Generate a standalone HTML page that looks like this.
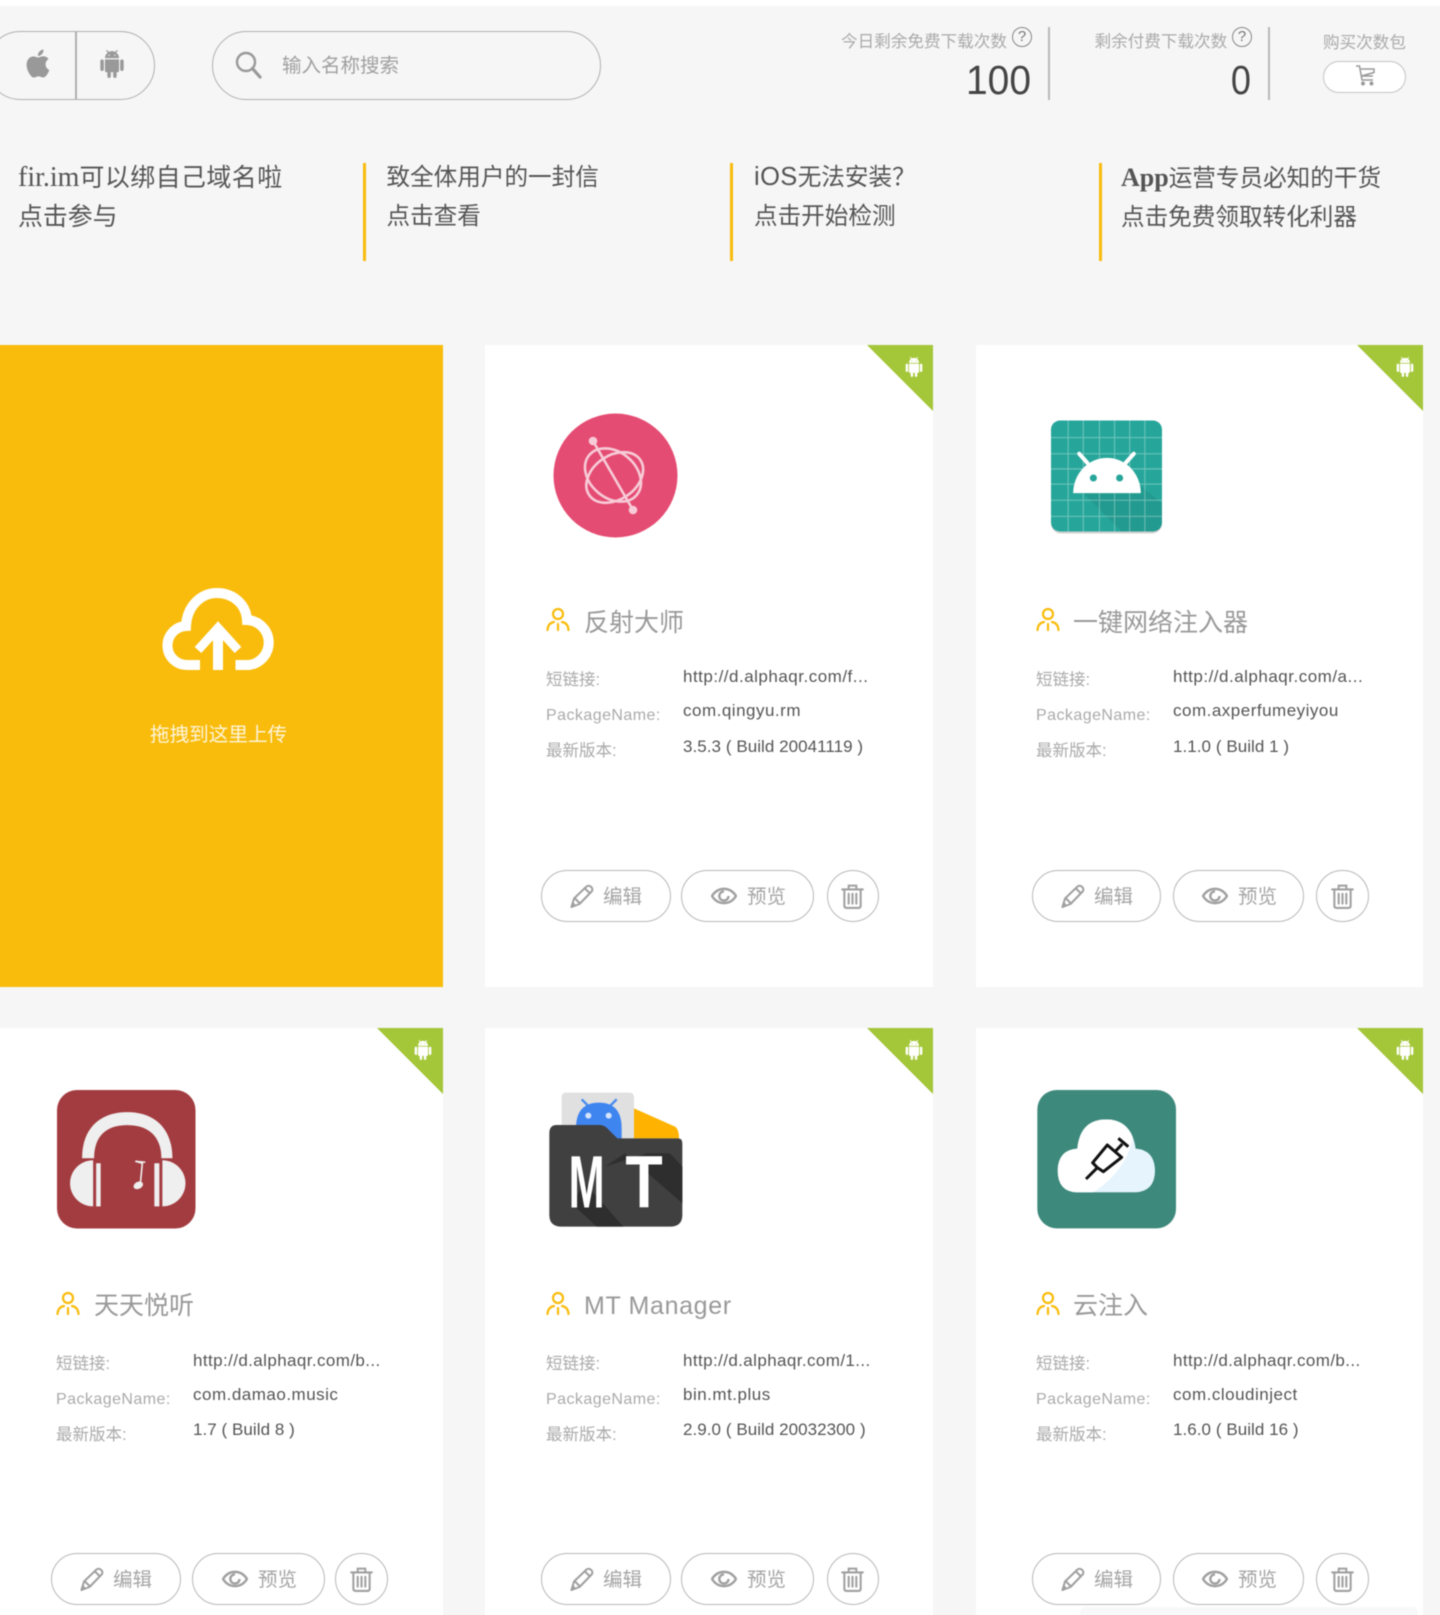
<!DOCTYPE html>
<html lang="zh-CN"><head><meta charset="utf-8"><title>fir.im</title>
<style>
*{box-sizing:border-box;margin:0;padding:0}
html,body{width:1440px;height:1615px;overflow:hidden;background:#f6f6f6}
body{font-family:"Liberation Sans","Noto Sans CJK SC",sans-serif;position:relative}
#p{position:absolute;left:-10px;top:-10px;width:1460px;height:1635px;overflow:hidden;background:#f6f6f6;filter:blur(.6px)}
#q{position:absolute;left:10px;top:10px;width:1440px;height:1615px}
.a{position:absolute;white-space:nowrap}
svg{position:absolute;overflow:visible}
#top{left:-10px;top:-10px;width:1460px;height:16px;background:#fff}
.pill{border:1.5px solid #b0b0b0;border-radius:35px;top:31px;height:69px}
.g{color:#aaa;font-size:16.6px;line-height:24px}
.num{color:#444;font-size:41px;line-height:44px;text-align:right;font-weight:400;transform-origin:100% 50%}
.vl{width:1.5px;background:#b8b8b8;top:27px;height:73px}
.help{width:20px;height:20px;border:1.6px solid #888;border-radius:50%;color:#777;font-size:15px;line-height:17px;text-align:center}
.bar{width:3px;top:163px;height:98px;background:#f9bc0c}
.bt{color:#555;font-size:23.6px;line-height:39px;left:0;top:158.5px}
.card{position:absolute;height:642px;background:#fff;overflow:hidden}
.tri{position:absolute;right:0;top:0;width:0;height:0;border-style:solid;border-width:0 66px 66px 0;border-color:transparent #a4c639 transparent transparent}
.nm{left:99px;top:263px;font-size:25px;line-height:30px;color:#999}
.lb{left:61px;font-size:16.5px;line-height:24px;color:#aaa}
.pk{font-size:16px;letter-spacing:.45px}
.v{left:198px;font-size:17px;line-height:24px;color:#555;letter-spacing:.5px}
.u2{letter-spacing:.4px}
.ver{letter-spacing:.05px}
.btn{position:absolute;top:525px;height:52px;border:1.5px solid #b8b8b8;border-radius:26px;background:#fff}
.btn span{position:absolute;top:13px;font-size:19.5px;line-height:26px;color:#a5a5a5;white-space:nowrap}
</style></head><body><div id="p"><div id="q">
<svg width="0" height="0" style="position:absolute">
<defs>
<symbol id="and" viewBox="0 0 24 24"><path d="M6 18c0 .55.45 1 1 1h1v3.5c0 .83.67 1.5 1.5 1.5s1.5-.67 1.5-1.5V19h2v3.5c0 .83.67 1.5 1.5 1.5s1.5-.67 1.5-1.5V19h1c.55 0 1-.45 1-1V8H6v10zM3.5 8C2.67 8 2 8.67 2 9.5v7c0 .83.67 1.5 1.5 1.5S5 17.33 5 16.5v-7C5 8.67 4.33 8 3.5 8zm17 0c-.83 0-1.5.67-1.5 1.5v7c0 .83.67 1.5 1.5 1.5s1.5-.67 1.5-1.5v-7c0-.83-.67-1.5-1.5-1.5zm-4.97-5.84l1.3-1.3c.2-.2.2-.51 0-.71-.2-.2-.51-.2-.71 0l-1.48 1.48C13.85 1.23 12.95 1 12 1c-.96 0-1.86.23-2.66.63L7.85.15c-.2-.2-.51-.2-.71 0-.2.2-.2.51 0 .71l1.31 1.31C6.97 3.26 6 5.01 6 7h12c0-1.99-.97-3.75-2.47-4.84zM10 5H9V4h1v1zm5 0h-1V4h1v1z"/></symbol>
<symbol id="per" viewBox="0 0 24 24"><g fill="none" stroke="#f9bc0c" stroke-width="2.2" stroke-linecap="round"><circle cx="12" cy="7" r="5"/><path d="M1.5 23Q2 16 8 15M22.5 23Q22 16 16 15"/><path d="M12 17v6"/></g></symbol>
<symbol id="pen" viewBox="0 0 24 24"><g fill="none" stroke="#a0a0a0" stroke-width="2" stroke-linejoin="round"><path d="M1.5 23L4 14.5 16.5 2.5Q18.8.8 21.3 3 23.3 5.3 21.6 7.5L9.5 20Z"/><path d="M5 14.5l5 5M15 4.500l5 5"/><path d="M1.5 23l3-1.500-1.500-2.500z" fill="#a0a0a0"/></g></symbol>
<symbol id="eye" viewBox="0 0 26 20"><g fill="none" stroke="#a0a0a0" stroke-width="2.400"><path d="M1 10C7 .5 19 .5 25 10 19 19.500 7 19.500 1 10Z"/><path d="M17.500 10A4.600 4.600 0 1 1 13 5.400"/></g></symbol>
<symbol id="tr" viewBox="0 0 21 23"><g fill="none" stroke="#a0a0a0" stroke-width="1.900" stroke-linecap="round"><path d="M1 5H20M7 4.500V1.500H14V4.500"/><path d="M3 5.500V20Q3 22 5 22H16Q18 22 18 20V5.500"/><path d="M7 9v9M10.500 9v9M14 9v9"/></g></symbol>
</defs></svg>

<div id="top" class="a"></div>
<div class="a" style="left:-10px;top:345px;width:12px;height:642px;background:#f9bc0c"></div>
<div class="a" style="left:-10px;top:1028px;width:12px;height:600px;background:#fff"></div>

<!-- toolbar -->
<div class="a pill" style="left:-14px;width:169px"></div>
<div class="a" style="left:75px;top:31px;width:1.5px;height:69px;background:#b0b0b0"></div>
<svg style="left:24px;top:48px" width="28" height="31" viewBox="2 1 20 22"><path fill="#999" d="M18.710 19.500C17.880 20.740 17 21.950 15.660 21.970C14.320 22 13.890 21.180 12.370 21.180C10.840 21.180 10.370 21.950 9.100 22C7.790 22.050 6.800 20.680 5.960 19.470C4.250 17 2.940 12.450 4.700 9.390C5.570 7.870 7.130 6.910 8.820 6.880C10.100 6.860 11.320 7.750 12.110 7.750C12.890 7.750 14.370 6.680 15.920 6.840C16.570 6.870 18.390 7.100 19.560 8.820C19.470 8.880 17.390 10.100 17.410 12.630C17.440 15.650 20.060 16.660 20.090 16.670C20.060 16.740 19.670 18.110 18.710 19.500M13 3.500C13.730 2.670 14.940 2.040 15.940 2C16.070 3.170 15.600 4.350 14.900 5.190C14.210 6.040 13.070 6.700 11.950 6.610C11.800 5.460 12.360 4.260 13 3.500Z"/></svg>
<svg style="left:98px;top:50px;fill:#999" width="28" height="28"><use href="#and" width="28" height="28"/></svg>

<div class="a pill" style="left:212px;width:389px"></div>
<svg style="left:234px;top:50px" width="30" height="30"><circle cx="12" cy="12" r="9" fill="none" stroke="#999" stroke-width="2.400"/><path d="M18.500 18.500L26 27" stroke="#999" stroke-width="3.200" stroke-linecap="round"/></svg>
<div class="a" style="left:282px;top:53.5px;font-size:19.5px;line-height:24px;color:#a0a0a0">输入名称搜索</div>

<div class="a g" style="left:841px;top:30px">今日剩余免费下载次数</div>
<div class="a help" style="left:1012px;top:27px">?</div>
<div class="a num" style="left:931px;width:100px;top:58px;transform:scaleX(.95)">100</div>
<div class="a vl" style="left:1048px"></div>
<div class="a g" style="left:1094.5px;top:30px">剩余付费下载次数</div>
<div class="a help" style="left:1232px;top:27px">?</div>
<div class="a num" style="left:1180px;width:71px;top:58px;transform:scaleX(.88)">0</div>
<div class="a vl" style="left:1268px"></div>
<div class="a g" style="left:1323px;top:31px">购买次数包</div>
<div class="a" style="left:1323px;top:61px;width:83px;height:32px;border:1.5px solid #c4c4c4;border-radius:16px;background:#fff"></div>
<svg style="left:1355px;top:65px" width="21" height="21" fill="none" stroke="#999" stroke-width="1.500"><path d="M1 1H4.500L7 15H18M6 4H19V7.500L6.500 11H18"/><circle cx="8" cy="18.500" r="1.200" fill="#999"/><circle cx="16.500" cy="18.500" r="1.200" fill="#999"/></svg>

<!-- banners -->
<div class="a bt" style="left:18px;font-size:24.9px;top:158px"><span style="font-family:'Liberation Serif','Noto Sans CJK SC',serif;font-size:28px">fir.im</span><span style="letter-spacing:.5px">可以绑自己域名啦</span><br>点击参与</div>
<div class="a bar" style="left:363px"></div>
<div class="a bt" style="left:386.5px">致全体用户的一封信<br>点击查看</div>
<div class="a bar" style="left:730px"></div>
<div class="a bt" style="left:754px;top:157.5px"><span style="font-size:25.5px;letter-spacing:.4px">iOS</span>无法安装？<br>点击开始检测</div>
<div class="a bar" style="left:1099px"></div>
<div class="a bt" style="left:1121px;top:157.5px"><b style="font-family:'Liberation Serif','Noto Sans CJK SC',serif;font-size:26px">App</b>运营专员必知的干货<br>点击免费领取转化利器</div>

<!-- upload -->
<div class="a" style="left:0;top:345px;width:443px;height:642px;background:#f9bc0c"></div>
<svg style="left:100px;top:560px" width="240" height="200" fill="none" stroke="#fff"><path stroke-width="10" d="M100 105H88A19.500 19.500 0 0 1 86 66C87 46 101 33 117 33C133 33 146 44 147 60A22.600 22.600 0 0 1 149 105H135.500"/><path stroke-width="9" d="M98 90L118 68L138 90"/><path stroke-width="10" d="M118 70V110"/></svg>
<div class="a" style="left:150px;top:723px;font-size:19.6px;line-height:24px;color:#fff;opacity:.85">拖拽到这里上传</div>

<!-- card: 反射大师 -->
<div class="card" style="left:485px;top:345px;width:448px">
<div class="tri"></div><svg style="left:419px;top:12px;fill:#fff" width="20" height="20"><use href="#and" width="20" height="20"/></svg>
<svg style="left:68px;top:68px" width="125" height="125" viewBox="0 0 125 125"><circle cx="62.500" cy="62.500" r="62" fill="#e54c73"/><g fill="none" stroke="#f7cbd7" stroke-width="2.600"><path d="M40 28L80 97"/><ellipse cx="60" cy="62" rx="31" ry="23" transform="rotate(40 60 62)"/><ellipse cx="60" cy="62" rx="31" ry="22" transform="rotate(-35 60 62) translate(0 3)"/><circle cx="40" cy="28" r="3" fill="#f7cbd7"/><circle cx="80" cy="97" r="3" fill="#f7cbd7"/></g></svg>
<svg style="left:61px;top:262px" width="24" height="24"><use href="#per" width="24" height="24"/></svg>
<div class="a nm">反射大师</div>
<div class="a lb" style="top:323px">短链接:</div><div class="a lb pk" style="top:359px">PackageName:</div><div class="a lb" style="top:394px">最新版本:</div>
<div class="a v" style="top:320px">http://d.alphaqr.com/f...</div><div class="a v" style="top:354px">com.qingyu.rm</div><div class="a v ver" style="top:390px">3.5.3 ( Build 20041119 )</div>
<div class="btn" style="left:56px;width:130px"><svg style="left:28px;top:13px" width="24" height="24"><use href="#pen" width="24" height="24"/></svg><span style="left:61px">编辑</span></div>
<div class="btn" style="left:196px;width:133px"><svg style="left:29px;top:15px" width="26" height="20"><use href="#eye" width="26" height="20"/></svg><span style="left:65px">预览</span></div>
<div class="btn" style="left:342px;width:52px"><svg style="left:13px;top:12.500px" width="23" height="25"><use href="#tr" width="23" height="25"/></svg></div>
</div>

<!-- card: 一键网络注入器 -->
<div class="card" style="left:976px;top:345px;width:447px">
<div class="tri"></div><svg style="left:419px;top:12px;fill:#fff" width="20" height="20"><use href="#and" width="20" height="20"/></svg>
<svg style="left:75px;top:75px" width="111" height="112" viewBox="0 0 110 110"><rect x="0" y="2" width="110" height="110" rx="10" fill="#000" opacity=".18"/><rect width="110" height="110" rx="9" fill="#26a69a"/><path d="M32 72L70 110H101Q110 110 110 101V82L89 65Z" fill="#000" opacity=".07"/><path d="M17 0V110M32 0V110M48 0V110M63 0V110M78 0V110M93 0V110M0 17H110M0 33H110M0 48H110M0 63H110M0 79H110M0 95H110" stroke="#fff" stroke-opacity=".35" stroke-width="1"/><path d="M22 72A33.500 35 0 0 1 89 72Z" fill="#fff"/><path d="M28 33L36 42M82 33L74 42" stroke="#fff" stroke-width="4" stroke-linecap="round"/><circle cx="42" cy="57" r="3.500" fill="#26a69a"/><circle cx="68" cy="57" r="3.500" fill="#26a69a"/></svg>
<svg style="left:60px;top:262px" width="24" height="24"><use href="#per" width="24" height="24"/></svg>
<div class="a nm" style="left:97px">一键网络注入器</div>
<div class="a lb" style="left:60px;top:323px">短链接:</div><div class="a lb pk" style="left:60px;top:359px">PackageName:</div><div class="a lb" style="left:60px;top:394px">最新版本:</div>
<div class="a v" style="left:197px;top:320px">http://d.alphaqr.com/a...</div><div class="a v" style="left:197px;top:354px">com.axperfumeyiyou</div><div class="a v ver" style="left:197px;top:390px">1.1.0 ( Build 1 )</div>
<div class="btn" style="left:56px;width:129px"><svg style="left:28px;top:13px" width="24" height="24"><use href="#pen" width="24" height="24"/></svg><span style="left:61px">编辑</span></div>
<div class="btn" style="left:197px;width:131px"><svg style="left:28px;top:15px" width="26" height="20"><use href="#eye" width="26" height="20"/></svg><span style="left:64px">预览</span></div>
<div class="btn" style="left:340px;width:53px"><svg style="left:14px;top:12.500px" width="23" height="25"><use href="#tr" width="23" height="25"/></svg></div>
</div>

<!-- card: 天天悦听 -->
<div class="card" style="left:0;top:1028px;width:443px">
<div class="tri"></div><svg style="left:413px;top:12px;fill:#fff" width="20" height="20"><use href="#and" width="20" height="20"/></svg>
<svg style="left:56.500px;top:62px" width="138.500" height="138.500" viewBox="0 0 138 138"><rect width="138" height="138" rx="20" fill="#a33c40"/><g fill="#efefef"><path d="M25 68C25 38 43 22 70 22S115 38 115 68H104C104 46 91 35 70 35S37 46 37 68Z"/><path d="M36 70A23 23 0 0 0 36 116Z"/><path d="M105 70A23 23 0 0 1 105 116Z"/><rect x="39" y="73" width="4.500" height="43"/><rect x="97" y="73" width="5" height="43"/><ellipse cx="81" cy="95" rx="5" ry="3.500" transform="rotate(-25 81 95)"/></g><path d="M78 71L85 73 83 94M78 71L88 72" fill="none" stroke="#efefef" stroke-width="1.600"/></svg>
<svg style="left:56px;top:263px" width="24" height="24"><use href="#per" width="24" height="24"/></svg>
<div class="a nm" style="left:94px;top:262.5px">天天悦听</div>
<div class="a lb" style="left:56px;top:324px">短链接:</div><div class="a lb pk" style="left:56px;top:360px">PackageName:</div><div class="a lb" style="left:56px;top:395px">最新版本:</div>
<div class="a v u2" style="left:193px;top:321px">http://d.alphaqr.com/b...</div><div class="a v" style="left:193px;top:355px">com.damao.music</div><div class="a v ver" style="left:193px;top:390px">1.7 ( Build 8 )</div>
<div class="btn" style="left:51px;width:130px"><svg style="left:28px;top:13px" width="24" height="24"><use href="#pen" width="24" height="24"/></svg><span style="left:61px">编辑</span></div>
<div class="btn" style="left:192px;width:133px"><svg style="left:29px;top:15px" width="26" height="20"><use href="#eye" width="26" height="20"/></svg><span style="left:65px">预览</span></div>
<div class="btn" style="left:335px;width:53px"><svg style="left:14px;top:12.500px" width="23" height="25"><use href="#tr" width="23" height="25"/></svg></div>
</div>

<!-- card: MT Manager -->
<div class="card" style="left:485px;top:1028px;width:448px">
<div class="tri"></div><svg style="left:419px;top:12px;fill:#fff" width="20" height="20"><use href="#and" width="20" height="20"/></svg>
<svg style="left:45px;top:42px" width="200" height="180" viewBox="0 0 600 540"><rect x="95" y="68" width="217" height="150" rx="12" fill="#e0e0e0"/><path d="M312 115L435 170Q447 178 447 205H312Z" fill="#ffb300"/><path d="M155 88L175 108M260 88L240 108" stroke="#4a8cf0" stroke-width="7"/><path d="M138 175Q138 98 207 98 275 98 275 175V210H138Z" fill="#3f85f0"/><circle cx="175" cy="137" r="9" fill="#d5e4fc"/><circle cx="236" cy="137" r="9" fill="#d5e4fc"/><path d="M58 190Q58 165 80 165H210Q222 165 232 175L262 205H445Q457 205 457 220V435Q457 470 420 470H95Q58 470 58 435Z" fill="#404040"/><path d="M125 400L200 470H280L165 340ZM225 290L285 250 457 400V290L420 250 350 250Z" fill="#2e2e2e"/><text x="116" y="412" font-family="Liberation Sans" font-weight="700" font-size="222" fill="#fff" textLength="108" lengthAdjust="spacingAndGlyphs">M</text><text x="286" y="412" font-family="Liberation Sans" font-weight="700" font-size="222" fill="#fff" textLength="112" lengthAdjust="spacingAndGlyphs">T</text></svg>
<svg style="left:61px;top:263px" width="24" height="24"><use href="#per" width="24" height="24"/></svg>
<div class="a nm" style="top:262.5px;letter-spacing:.65px">MT Manager</div>
<div class="a lb" style="top:324px">短链接:</div><div class="a lb pk" style="top:360px">PackageName:</div><div class="a lb" style="top:395px">最新版本:</div>
<div class="a v u2" style="top:321px">http://d.alphaqr.com/1...</div><div class="a v" style="top:355px">bin.mt.plus</div><div class="a v ver" style="top:390px">2.9.0 ( Build 20032300 )</div>
<div class="btn" style="left:56px;width:130px"><svg style="left:28px;top:13px" width="24" height="24"><use href="#pen" width="24" height="24"/></svg><span style="left:61px">编辑</span></div>
<div class="btn" style="left:196px;width:133px"><svg style="left:29px;top:15px" width="26" height="20"><use href="#eye" width="26" height="20"/></svg><span style="left:65px">预览</span></div>
<div class="btn" style="left:342px;width:52px"><svg style="left:13px;top:12.500px" width="23" height="25"><use href="#tr" width="23" height="25"/></svg></div>
</div>

<!-- card: 云注入 -->
<div class="card" style="left:976px;top:1028px;width:447px">
<div class="tri"></div><svg style="left:419px;top:12px;fill:#fff" width="20" height="20"><use href="#and" width="20" height="20"/></svg>
<svg style="left:44px;top:42px" width="200" height="180" viewBox="0 0 600 540"><defs><clipPath id="cc"><path d="M170 367Q113 365 113 300 115 240 172 236 180 148 260 148 335 150 347 236 405 240 405 305 403 365 345 367Z"/></clipPath></defs><rect x="52" y="60" width="416" height="415" rx="58" fill="#3d897c"/><g clip-path="url(#cc)"><rect x="100" y="140" width="320" height="240" fill="#e6f4fd"/><path d="M100 140H345Q345 290 215 370H100Z" fill="#fff"/></g><g fill="none" stroke="#111" stroke-width="9"><path d="M198 327L232 293"/><path d="M232 293L218 278 262 225 305 262 250 305Z" stroke-linejoin="round"/><path d="M285 245L307 222M295 205L325 230"/></g></svg>
<svg style="left:60px;top:263px" width="24" height="24"><use href="#per" width="24" height="24"/></svg>
<div class="a nm" style="left:97px;top:262.5px">云注入</div>
<div class="a lb" style="left:60px;top:324px">短链接:</div><div class="a lb pk" style="left:60px;top:360px">PackageName:</div><div class="a lb" style="left:60px;top:395px">最新版本:</div>
<div class="a v u2" style="left:197px;top:321px">http://d.alphaqr.com/b...</div><div class="a v" style="left:197px;top:355px">com.cloudinject</div><div class="a v ver" style="left:197px;top:390px">1.6.0 ( Build 16 )</div>
<div class="btn" style="left:56px;width:129px"><svg style="left:28px;top:13px" width="24" height="24"><use href="#pen" width="24" height="24"/></svg><span style="left:61px">编辑</span></div>
<div class="btn" style="left:197px;width:131px"><svg style="left:28px;top:15px" width="26" height="20"><use href="#eye" width="26" height="20"/></svg><span style="left:64px">预览</span></div>
<div class="btn" style="left:340px;width:53px"><svg style="left:14px;top:12.500px" width="23" height="25"><use href="#tr" width="23" height="25"/></svg></div>
</div>
<div class="a" style="left:1080px;top:1607px;width:338px;height:20px;background:#f6f8fa;border-radius:6px"></div>
</div></div></body></html>
